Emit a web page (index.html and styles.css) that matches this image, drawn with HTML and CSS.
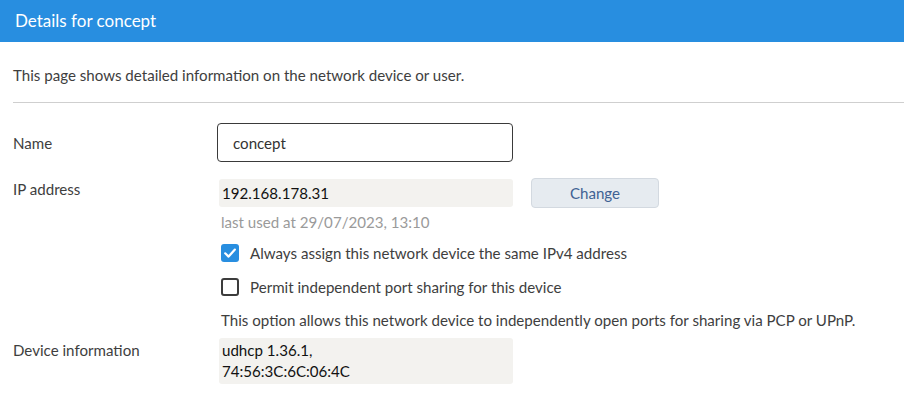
FILE: index.html
```html
<!DOCTYPE html>
<html lang="en">
<head>
<meta charset="utf-8">
<title>Details for concept</title>
<link rel="stylesheet" href="styles.css">
</head>
<body>
<header class="titlebar">Details for concept</header>
<main class="content">
  <p class="intro">This page shows detailed information on the network device or user.</p>
  <hr class="divider">
  <div class="row row-name">
    <label class="label" for="name">Name</label>
    <div class="value">
      <input id="name" class="text-input" type="text" value="concept">
    </div>
  </div>
  <div class="row">
    <div class="label">IP address</div>
    <div class="value">
      <div class="ip-line">
        <div class="readonly ip-field">192.168.178.31</div>
        <button class="btn" type="button">Change</button>
      </div>
      <div class="hint">last used at 29/07/2023, 13:10</div>
      <label class="check check-first">
        <span class="box checked">
          <svg viewBox="0 0 18 18" width="18" height="18"><path d="M4.2 9.3 L7.6 12.6 L13.9 5.6" fill="none" stroke="#fff" stroke-width="2.2" stroke-linecap="round" stroke-linejoin="round"/></svg>
        </span>
        <span>Always assign this network device the same IPv4 address</span>
      </label>
      <label class="check">
        <span class="box"></span>
        <span>Permit independent port sharing for this device</span>
      </label>
      <p class="note">This option allows this network device to independently open ports for sharing via PCP or UPnP.</p>
    </div>
  </div>
  <div class="row row-device">
    <div class="label">Device information</div>
    <div class="value">
      <div class="readonly device-field">udhcp 1.36.1,<br>74:56:3C:6C:06:4C</div>
    </div>
  </div>
</main>
</body>
</html>
```
FILE: styles.css
```css
* { box-sizing: border-box; }
html, body { margin: 0; padding: 0; background: #fff; }
body {
  font-family: "Source Sans Pro", Lato, "Liberation Sans", sans-serif;
  font-size: 15.1px;
  color: #3e3e3e;
  width: 904px;
  overflow: hidden;
}
.titlebar {
  height: 42px;
  background: #288ee0;
  color: #fff;
  font-size: 17px;
  line-height: 42px;
  padding-left: 15px;
}
.content { padding-left: 13px; }
.intro {
  margin: 0;
  padding-top: 23px;
  line-height: 20px;
}
.divider {
  margin: 17px 0 0 0;
  border: 0;
  border-top: 1px solid #cfcfcf;
  height: 0;
}
.row {
  display: grid;
  grid-template-columns: 204px 1fr;
  align-items: start;
}
.label { line-height: 22px; }
.row-name { margin-top: 20px; align-items: center; }
.text-input {
  display: block;
  width: 296px;
  height: 39px;
  border: 1px solid #3a3a3a;
  border-radius: 4px;
  padding: 0 15px;
  font: inherit;
  color: #333;
  outline: none;
}
.row + .row { margin-top: 16px; }
.ip-line { display: flex; align-items: center; gap: 18px; }
.readonly {
  background: #f3f2ef;
  border-radius: 3px;
  color: #111;
  margin-left: 2px;
  padding-left: 3px;
}
.ip-field { width: 294px; height: 28px; line-height: 28px; }
.btn {
  width: 128px;
  height: 30px;
  background: #e6ebf0;
  border: 1px solid #d3d9e0;
  border-radius: 4px;
  color: #3f6294;
  font: inherit;
  padding: 0;
}
.hint { color: #9a9a9a; padding-left: 4px; line-height: 20px; margin-top: 4px; }
.check {
  display: flex;
  align-items: center;
  gap: 11px;
  padding-left: 4px;
  line-height: 20px;
}
.check-first { margin-top: 11px; }
.check + .check { margin-top: 14px; }
.box {
  width: 18px; height: 18px;
  border: 2px solid #3c3c3c;
  border-radius: 3px;
  display: inline-block;
  flex: none;
}
.box.checked {
  border: 0;
  background: #288ee0;
}
.box svg { display: block; }
.note { margin: 13px 0 0 0; padding-left: 4px; line-height: 20px; }
.row-device { margin-top: 8px !important; }
.row-device .label { padding-top: 1px; }
.device-field {
  width: 294px;
  height: 46px;
  padding-top: 2px;
  line-height: 21px;
}
```
